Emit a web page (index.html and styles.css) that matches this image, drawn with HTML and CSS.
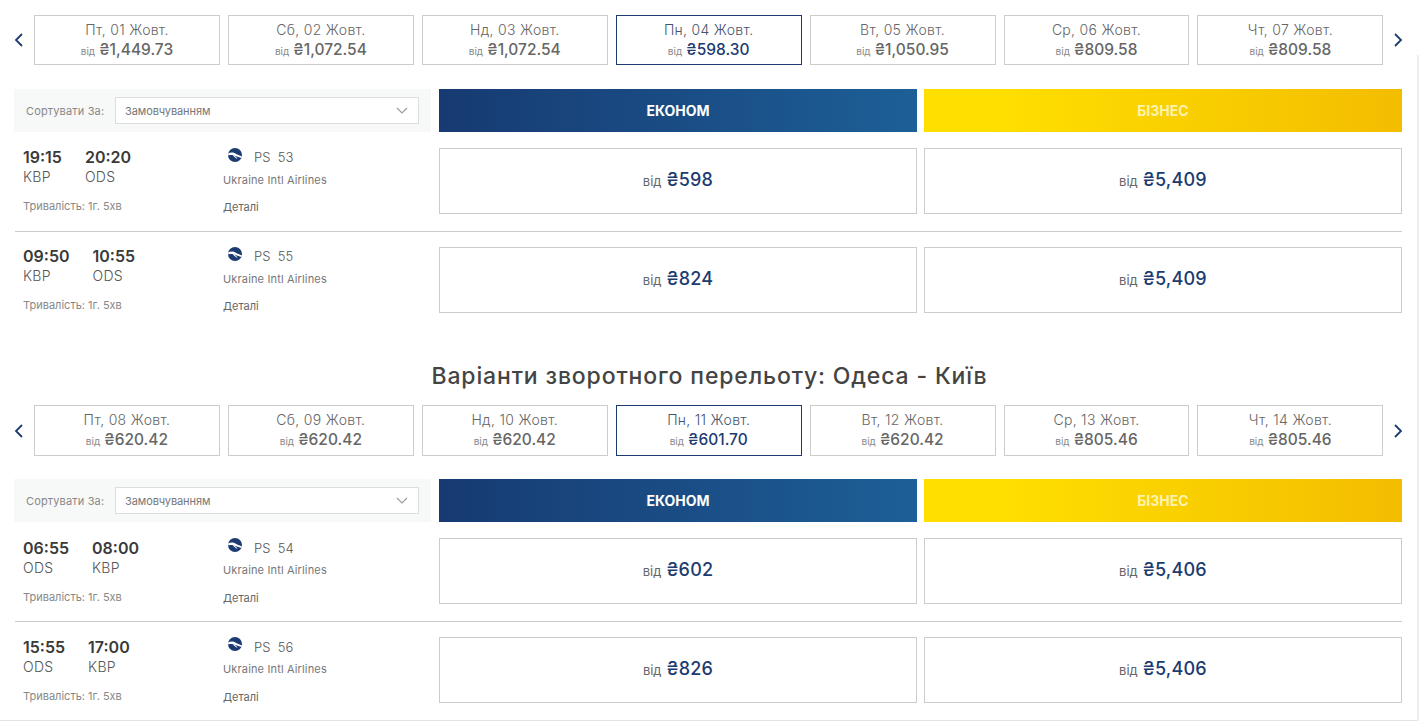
FILE: index.html
```html
<!DOCTYPE html>
<html lang="uk">
<head>
    <meta charset="UTF-8">
    <title>Варіанти перельоту</title>
    <link rel="stylesheet" href="styles.css">
</head>
<body>
    <svg class="sprite" width="0" height="0">
        <symbol id="uia" viewBox="0 0 14 14">
            <circle cx="7" cy="7" r="7" fill="#1c3b70"/>
            <path d="M0 5.6C3 4 6 4.4 8.6 6.2L14 8.6 13.4 10 8.2 8.2C5.4 7.2 3 6.4 0.4 7.4Z" fill="#fff"/>
            <path d="M6.4 7.4L9.6 10.4 8.4 10.6 4.8 7.4Z" fill="#fff"/>
        </symbol>
    </svg>
    <div class="page-edge"></div>

    <!-- Outbound -->
    <div class="strip">
        <div class="arrow"><svg width="10" height="14" viewBox="0 0 10 14"><path d="M8 1L2 7l6 6" /></svg></div>
        <div class="dates">
            <div class="date"><div class="day">Пт, 01 Жовт.</div><div class="fare"><small>від</small> ₴1,449.73</div></div>
            <div class="date"><div class="day">Сб, 02 Жовт.</div><div class="fare"><small>від</small> ₴1,072.54</div></div>
            <div class="date"><div class="day">Нд, 03 Жовт.</div><div class="fare"><small>від</small> ₴1,072.54</div></div>
            <div class="date active"><div class="day">Пн, 04 Жовт.</div><div class="fare"><small>від</small> ₴598.30</div></div>
            <div class="date"><div class="day">Вт, 05 Жовт.</div><div class="fare"><small>від</small> ₴1,050.95</div></div>
            <div class="date"><div class="day">Ср, 06 Жовт.</div><div class="fare"><small>від</small> ₴809.58</div></div>
            <div class="date"><div class="day">Чт, 07 Жовт.</div><div class="fare"><small>від</small> ₴809.58</div></div>
        </div>
        <div class="arrow"><svg width="10" height="14" viewBox="0 0 10 14"><path d="M2 1l6 6-6 6" /></svg></div>
    </div>

    <div class="head-row">
        <div class="sort">
            <span class="sort-label">Сортувати За:</span>
            <div class="select">Замовчуванням<svg width="12" height="7" viewBox="0 0 12 7"><path d="M1 1l5 5 5-5" /></svg></div>
        </div>
        <div class="cabin eco">ЕКОНОМ</div>
        <div class="cabin biz">БІЗНЕС</div>
    </div>

    <div class="flight">
        <div class="info">
            <div class="times">
                <div class="leg"><b>19:15</b><span>KBP</span></div>
                <div class="leg"><b>20:20</b><span>ODS</span></div>
            </div>
            <div class="carrier"><svg class="logo"><use href="#uia"/></svg><span class="num">PS&nbsp; 53</span></div>
            <div class="duration">Тривалість: 1г. 5хв</div>
            <div class="airline">Ukraine Intl Airlines</div>
            <div class="details">Деталі</div>
        </div>
        <div class="price"><small>від</small> <b>₴598</b></div>
        <div class="price"><small>від</small> <b>₴5,409</b></div>
    </div>
    <div class="flight no-line">
        <div class="info">
            <div class="times">
                <div class="leg"><b>09:50</b><span>KBP</span></div>
                <div class="leg"><b>10:55</b><span>ODS</span></div>
            </div>
            <div class="carrier"><svg class="logo"><use href="#uia"/></svg><span class="num">PS&nbsp; 55</span></div>
            <div class="duration">Тривалість: 1г. 5хв</div>
            <div class="airline">Ukraine Intl Airlines</div>
            <div class="details">Деталі</div>
        </div>
        <div class="price"><small>від</small> <b>₴824</b></div>
        <div class="price"><small>від</small> <b>₴5,409</b></div>
    </div>

    <!-- Return -->
    <h2 class="title">Варіанти зворотного перельоту: Одеса - Київ</h2>

    <div class="strip return">
        <div class="arrow"><svg width="10" height="14" viewBox="0 0 10 14"><path d="M8 1L2 7l6 6" /></svg></div>
        <div class="dates">
            <div class="date"><div class="day">Пт, 08 Жовт.</div><div class="fare"><small>від</small> ₴620.42</div></div>
            <div class="date"><div class="day">Сб, 09 Жовт.</div><div class="fare"><small>від</small> ₴620.42</div></div>
            <div class="date"><div class="day">Нд, 10 Жовт.</div><div class="fare"><small>від</small> ₴620.42</div></div>
            <div class="date active"><div class="day">Пн, 11 Жовт.</div><div class="fare"><small>від</small> ₴601.70</div></div>
            <div class="date"><div class="day">Вт, 12 Жовт.</div><div class="fare"><small>від</small> ₴620.42</div></div>
            <div class="date"><div class="day">Ср, 13 Жовт.</div><div class="fare"><small>від</small> ₴805.46</div></div>
            <div class="date"><div class="day">Чт, 14 Жовт.</div><div class="fare"><small>від</small> ₴805.46</div></div>
        </div>
        <div class="arrow"><svg width="10" height="14" viewBox="0 0 10 14"><path d="M2 1l6 6-6 6" /></svg></div>
    </div>

    <div class="head-row">
        <div class="sort">
            <span class="sort-label">Сортувати За:</span>
            <div class="select">Замовчуванням<svg width="12" height="7" viewBox="0 0 12 7"><path d="M1 1l5 5 5-5" /></svg></div>
        </div>
        <div class="cabin eco">ЕКОНОМ</div>
        <div class="cabin biz">БІЗНЕС</div>
    </div>

    <div class="flight">
        <div class="info">
            <div class="times">
                <div class="leg"><b>06:55</b><span>ODS</span></div>
                <div class="leg"><b>08:00</b><span>KBP</span></div>
            </div>
            <div class="carrier"><svg class="logo"><use href="#uia"/></svg><span class="num">PS&nbsp; 54</span></div>
            <div class="duration">Тривалість: 1г. 5хв</div>
            <div class="airline">Ukraine Intl Airlines</div>
            <div class="details">Деталі</div>
        </div>
        <div class="price"><small>від</small> <b>₴602</b></div>
        <div class="price"><small>від</small> <b>₴5,406</b></div>
    </div>
    <div class="flight last">
        <div class="info">
            <div class="times">
                <div class="leg"><b>15:55</b><span>ODS</span></div>
                <div class="leg"><b>17:00</b><span>KBP</span></div>
            </div>
            <div class="carrier"><svg class="logo"><use href="#uia"/></svg><span class="num">PS&nbsp; 56</span></div>
            <div class="duration">Тривалість: 1г. 5хв</div>
            <div class="airline">Ukraine Intl Airlines</div>
            <div class="details">Деталі</div>
        </div>
        <div class="price"><small>від</small> <b>₴826</b></div>
        <div class="price"><small>від</small> <b>₴5,406</b></div>
    </div>
</body>
</html>
```

FILE: styles.css
```css
html, body {
    margin: 0;
    height: 721px;
    overflow: hidden;
}

body {
    position: relative;
    padding-top: 15px;
    box-sizing: border-box;
    background-color: #fff;
    font-family: Inter, "Noto Sans", sans-serif;
    color: #666;
}

.sprite {
    position: absolute;
}

/* thin line down the right of the page */
.page-edge {
    position: absolute;
    top: 55px;
    bottom: 0;
    right: 0;
    width: 2px;
    background-color: #eee;
}

/* Date strip */
.strip {
    display: flex;
    align-items: center;
    height: 50px;
    padding-left: 14px;
}

.strip.return {
    height: 51px;
}

.strip.return + .head-row {
    margin-top: 23px;
}

.arrow {
    width: 20px;
    display: flex;
}

.arrow svg {
    fill: none;
    stroke: #1c3b70;
    stroke-width: 1.8;
}

.strip .arrow:last-child {
    padding-left: 10px;
}

.dates {
    display: flex;
    gap: 8px;
    width: 1349.3px;
    height: 100%;
}

.date {
    flex: 1;
    border: 1px solid #ccc;
    text-align: center;
}

.date.active {
    border-color: #1c3b70;
}

.day {
    margin-top: 5px;
    font-size: 14px;
    line-height: 17px;
    font-weight: 300;
    letter-spacing: 0.3px;
    color: #666;
}

.fare {
    margin-top: 2px;
    font-size: 15.5px;
    line-height: 20px;
    font-weight: 500;
    color: #666;
}

.fare small {
    font-size: 10px;
    font-weight: 400;
    color: #888;
}

.active .day {
    color: #44546e;
}

.active .fare {
    color: #1c3b70;
}

/* Header of the table */
.head-row, .flight {
    display: grid;
    grid-template-columns: 418px 478px 478px;
    column-gap: 7px;
    padding-left: 14px;
}

.head-row {
    margin-top: 24px;
    height: 43px;
}

.sort {
    width: 417px;
    display: flex;
    align-items: center;
    box-sizing: border-box;
    padding: 0 12px;
    background-color: #f7f8f8;
}

.sort-label {
    width: 89px;
    font-size: 11px;
    letter-spacing: 0.15px;
    color: #888;
}

.select {
    flex: 1;
    display: flex;
    align-items: center;
    justify-content: space-between;
    box-sizing: border-box;
    height: 27px;
    padding: 0 9px;
    background-color: #fff;
    border: 1px solid #ddd;
    font-size: 11px;
    letter-spacing: -0.1px;
    color: #777;
}

.select svg {
    fill: none;
    stroke: #999;
    stroke-width: 1.1;
    margin-right: 1px;
}

.cabin {
    display: flex;
    align-items: center;
    justify-content: center;
    padding-bottom: 1px;
    font-size: 14px;
    font-weight: 700;
    color: #fff;
}

.eco {
    background: linear-gradient(90deg, #173a72, #1d5f97);
}

.biz {
    background: linear-gradient(90deg, #ffdf00 15%, #f3bd00);
    color: #fdf3b0;
}

/* Flight rows */
.flight {
    height: 100px;
    align-items: start;
    box-sizing: border-box;
    background: linear-gradient(#ccc, #ccc) no-repeat 15px bottom / 1387px 1px;
}

.flight.no-line {
    height: 99px;
    background: none;
}

.flight.last {
    height: 99px;
    background-image: linear-gradient(#e4e4e4, #e4e4e4);
    background-size: 100% 1px;
    background-position: 0 bottom;
}

.info {
    display: grid;
    grid-template-columns: 200px 1fr;
    grid-template-rows: 25px 26px auto;
    padding: 15px 0 0 9px;
}

.flight + .flight .info {
    padding-top: 14px;
}

/* the return rows sit a pixel lower */
.strip.return ~ .flight .info {
    padding-top: 16px;
}

.strip.return ~ .flight + .flight .info {
    padding-top: 15px;
}

.strip.return ~ .flight .logo {
    margin-top: -7px;
}

.strip.return ~ .flight .airline {
    margin-top: -1px;
}

.times {
    display: flex;
    gap: 23px;
    grid-row: 1 / 3;
}

.leg b {
    display: block;
    font-size: 16px;
    line-height: 20px;
    font-weight: 600;
    color: #3a3a3a;
}

.leg span {
    display: block;
    font-size: 14px;
    line-height: 20px;
    letter-spacing: 0.3px;
    font-weight: 300;
    color: #555;
}

.carrier {
    display: flex;
    align-items: center;
    height: 20px;
    grid-column: 2;
    grid-row: 1;
}

.logo {
    width: 14px;
    height: 14px;
    margin: -5px 12px 0 5px;
}

.num {
    font-size: 13px;
    font-weight: 300;
    color: #555;
}

.airline {
    grid-column: 2;
    grid-row: 2;
    font-size: 11px;
    line-height: 16px;
    letter-spacing: 0.15px;
    color: #777;
}

.duration {
    grid-column: 1;
    grid-row: 3;
    font-size: 11px;
    line-height: 16px;
    color: #888;
}

.details {
    grid-column: 2;
    grid-row: 3;
    margin-top: 1px;
    font-size: 11px;
    line-height: 16px;
    color: #666;
}

.price {
    display: flex;
    align-items: center;
    justify-content: center;
    gap: 5px;
    height: 66px;
    margin-top: 16px;
    padding-bottom: 3px;
    box-sizing: border-box;
    border: 1px solid #ccc;
}

.flight + .flight .price {
    margin-top: 15px;
}

.price small {
    padding-top: 2px;
    font-size: 13px;
    color: #666;
}

.price b {
    font-size: 18px;
    font-weight: 500;
    letter-spacing: 0.2px;
    color: #1c3b70;
}

/* Return title */
.title {
    margin: 31px 0 15px;
    text-align: center;
    font-size: 23px;
    line-height: 28px;
    font-weight: 500;
    letter-spacing: 0.85px;
    color: #444;
}
```
